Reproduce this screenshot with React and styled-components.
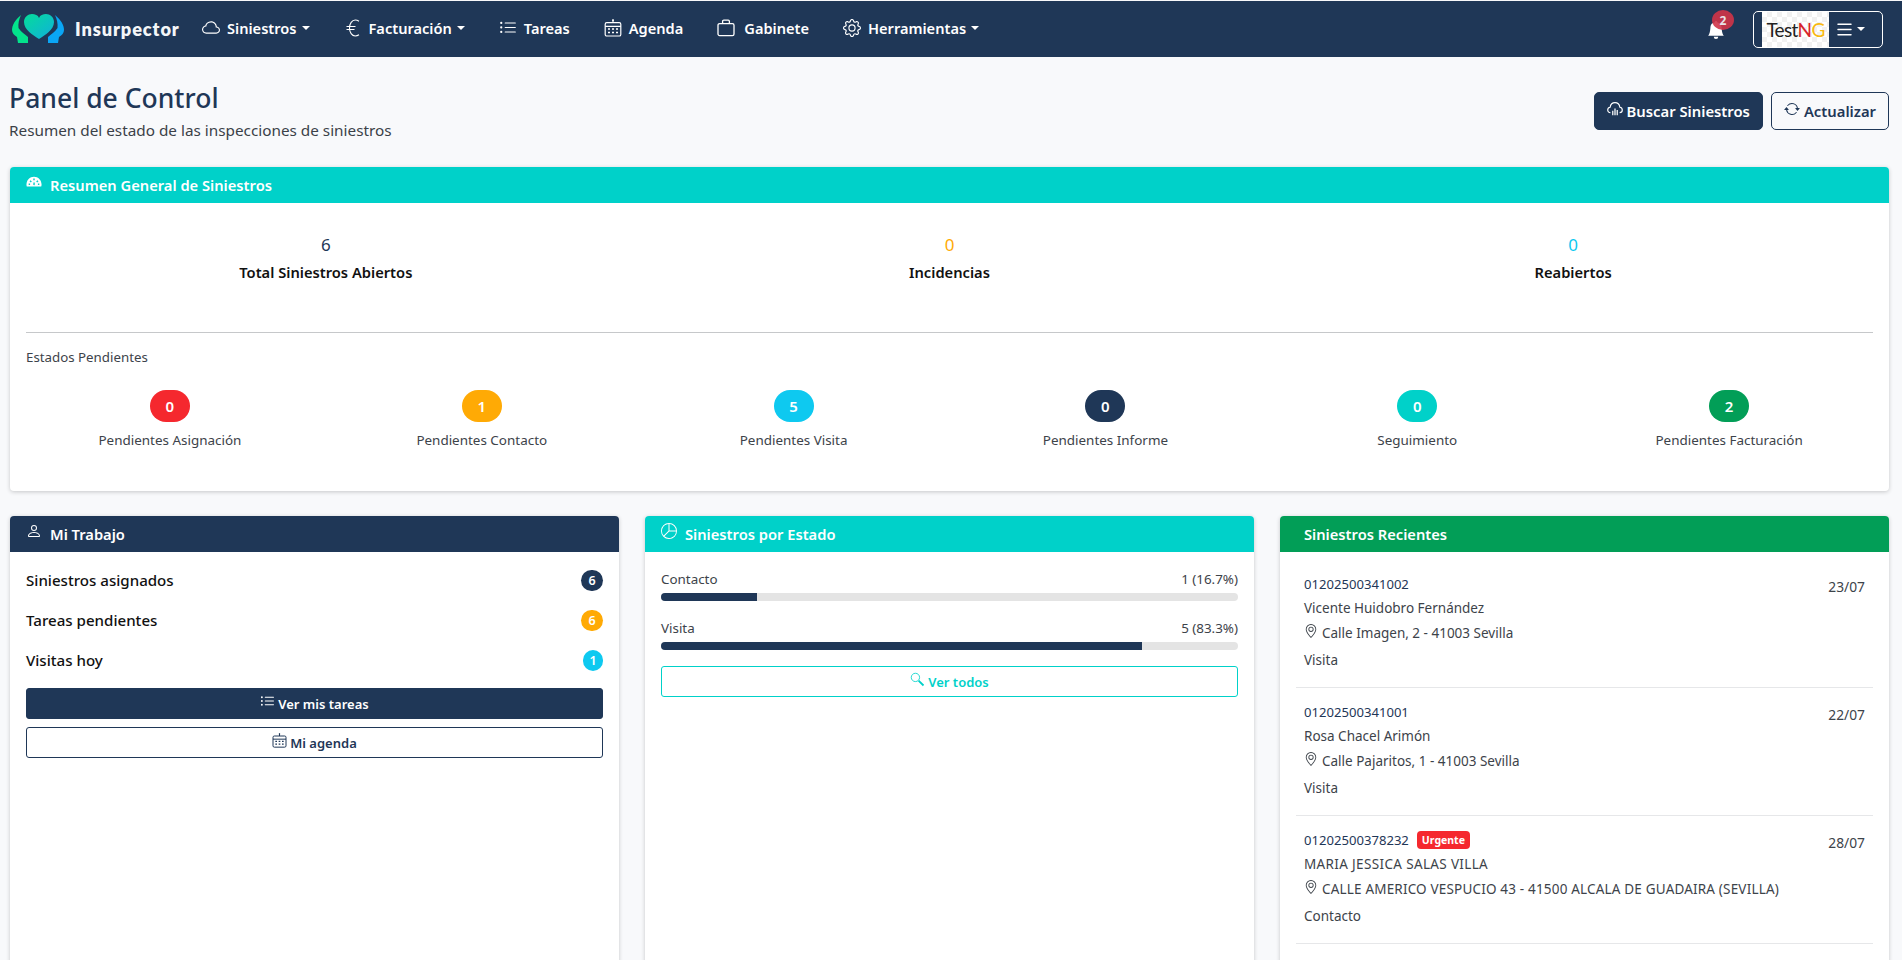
import React from 'react';
import styled, { createGlobalStyle } from 'styled-components';
import {
  BsCloud, BsListUl, BsGear, BsBellFill, BsArrowRepeat,
  BsPerson, BsPieChart, BsGeoAlt, BsList,
} from 'react-icons/bs';

const navy = '#1f3757';
const teal = '#00d1c9';
const green = '#029e57';
const red = '#f5282e';
const amber = '#ffaa05';
const sky = '#0ec9f0';

const GlobalStyle = createGlobalStyle`
  html, body {
    margin: 0;
    height: 100%;
    overflow: hidden;
    background: #f8f9fb;
  }
  body {
    font-family: "Noto Sans", "Open Sans", sans-serif;
    font-size: 13px;
    color: #343a40;
  }
  * { box-sizing: border-box; }
`;

const Navbar = styled.nav`
  margin-top: 1px;
  height: 56px;
  background: ${navy};
  color: #fff;
  display: flex;
  align-items: center;
  padding: 0 19px 0 12px;
`;

const Brand = styled.div`
  display: flex;
  align-items: center;
  gap: 11px;
  width: 190px;
`;

const BrandName = styled.span`
  font: 800 18.2px Lato, "Noto Sans", sans-serif;
  letter-spacing: 0.9px;
  color: #f4f6f8;
`;

const NavLinks = styled.div`
  display: flex;
  align-items: center;
  gap: 34px;
  padding-bottom: 3px;
`;

const NavLink = styled.a`
  display: flex;
  align-items: center;
  gap: ${(p) => p.$gap || '7px'};
  font-size: 14.6px;
  font-weight: 600;
  color: #fff;
  white-space: nowrap;
  svg { font-size: 18px; flex: none; }
`;

const Caret = styled.span`
  width: 0;
  height: 0;
  margin-left: -2px;
  border-top: 4.5px solid currentColor;
  border-left: 4.5px solid transparent;
  border-right: 4.5px solid transparent;
`;

const NavRight = styled.div`
  margin-left: auto;
  display: flex;
  align-items: center;
  gap: 28px;
`;

const BellWrap = styled.div`
  position: relative;
  display: flex;
  font-size: 18px;
  padding-top: 2px;
`;

const BellBadge = styled.span`
  position: absolute;
  top: -9px;
  left: 5px;
  width: 22px;
  height: 20px;
  border-radius: 50%;
  background: rgba(208, 52, 72, 0.9);
  color: #e9e2e6;
  font-size: 12px;
  font-weight: 700;
  display: flex;
  align-items: center;
  justify-content: center;
`;

const UserBox = styled.div`
  width: 130px;
  height: 37px;
  border: 1px solid #fff;
  border-radius: 5px;
  display: flex;
  align-items: center;
  padding-left: 8px;
  gap: 5px;
`;

const CompanyLogo = styled.div`
  width: 67px;
  height: 35px;
  background-color: #fff;
  background-image: conic-gradient(#f1f1f1 25%, #fff 0 50%, #f1f1f1 0 75%, #fff 0);
  background-size: 10px 10px;
  display: flex;
  align-items: center;
  justify-content: center;
  font: 400 19px Lato, sans-serif;
  letter-spacing: -0.7px;
  color: #222;
`;

const LogoLetter = styled.span`
  color: ${(p) => p.$color};
`;

const MenuToggle = styled.div`
  display: flex;
  align-items: center;
  gap: 4px;
  font-size: 21px;
`;

const Page = styled.main`
  padding: 0 13px 0 10px;
`;

const PageHeader = styled.header`
  display: flex;
  justify-content: space-between;
  align-items: flex-start;
  height: 110px;
  padding-top: 23px;
`;

const Title = styled.h1`
  margin: 0 0 3px -1px;
  font-size: 26.5px;
  font-weight: 500;
  line-height: 36px;
  color: ${navy};
`;

const Subtitle = styled.p`
  margin: 0 0 0 -1px;
  font-size: 15.3px;
  line-height: 22px;
  color: #3b4148;
`;

const HeaderActions = styled.div`
  display: flex;
  gap: 8px;
  margin-top: 12px;
`;

const ActionButton = styled.button`
  height: 38px;
  padding: 0 12px;
  display: flex;
  align-items: center;
  gap: 4px;
  border-radius: 5px;
  border: 1px solid ${navy};
  background: ${(p) => (p.$outline ? 'transparent' : navy)};
  color: ${(p) => (p.$outline ? navy : '#fff')};
  font: 600 14.8px "Noto Sans", sans-serif;
  svg { font-size: 16px; margin-top: -5px; }
`;

const Card = styled.section`
  background: #fff;
  border-radius: 4px;
  box-shadow: 0 1px 4px rgba(0, 0, 0, 0.2);
  overflow: hidden;
`;

const CardHeader = styled.div`
  height: 36px;
  padding: 0 ${(p) => (p.$plain ? '24px' : '16px')} 1px;
  display: flex;
  align-items: center;
  gap: 8px;
  background: ${(p) => p.$bg};
  color: #fff;
  font-size: 14.7px;
  font-weight: 600;
  svg { font-size: 16px; margin-top: -5px; }
`;

const SummaryBody = styled.div`
  padding: 30px 16px 41px;
`;

const StatRow = styled.div`
  display: grid;
  grid-template-columns: repeat(3, 1fr);
  margin: 0 -12px;
  text-align: center;
`;

const StatValue = styled.div`
  font-size: 17px;
  line-height: 24px;
  color: ${(p) => p.$color};
`;

const StatLabel = styled.div`
  margin-top: 3px;
  font-size: 14.7px;
  font-weight: 600;
  line-height: 24px;
  color: #111;
`;

const Divider = styled.hr`
  margin: 48px 0 14px;
  border: 0;
  border-top: 1.5px solid #c6c8ca;
`;

const SectionLabel = styled.div`
  font-size: 13.3px;
  line-height: 20px;
  color: #3d434a;
`;

const PendingRow = styled.div`
  display: grid;
  grid-template-columns: repeat(6, 1fr);
  margin: 23px -12px 0;
  text-align: center;
`;

const PendingCell = styled.div`
  display: flex;
  flex-direction: column;
  align-items: center;
  gap: 8px;
`;

const Pill = styled.span`
  width: 40px;
  height: 32px;
  border-radius: 16px;
  background: ${(p) => p.$bg};
  color: #fff;
  font-size: 15px;
  font-weight: 600;
  display: flex;
  align-items: center;
  justify-content: center;
`;

const PendingLabel = styled.span`
  font-size: 13.45px;
  line-height: 20px;
  color: #3d434a;
`;

const Columns = styled.div`
  margin-top: 25px;
  display: grid;
  grid-template-columns: repeat(3, 1fr);
  gap: 26px;
  height: 520px;
`;

const WorkBody = styled.div`
  padding: 8px 16px;
`;

const WorkRow = styled.div`
  height: 40px;
  display: flex;
  align-items: center;
  justify-content: space-between;
  font-size: 15.1px;
  font-weight: 500;
  color: #111;
`;

const CountBadge = styled.span`
  min-width: ${(p) => (p.$narrow ? '20px' : '22px')};
  height: 21px;
  border-radius: 11px;
  background: ${(p) => p.$bg};
  color: #fff;
  font-size: 12.5px;
  font-weight: 600;
  display: flex;
  align-items: center;
  justify-content: center;
`;

const BlockButton = styled.button`
  width: 100%;
  height: 31px;
  margin-top: ${(p) => p.$mt || '8px'};
  display: flex;
  align-items: center;
  justify-content: center;
  gap: 3px;
  border-radius: 3px;
  border: 1px solid ${(p) => p.$color};
  background: ${(p) => (p.$solid ? p.$color : '#fff')};
  color: ${(p) => (p.$solid ? '#fff' : p.$color)};
  font: 600 13px "Noto Sans", sans-serif;
  svg { font-size: 15px; margin-top: -4px; }
`;

const StateBody = styled.div`
  padding: 17px 16px;
`;

const BarGroup = styled.div`
  & + & { margin-top: 17px; }
`;

const BarHead = styled.div`
  display: flex;
  justify-content: space-between;
  font-size: 13.4px;
  line-height: 20px;
  color: #3d434a;
`;

const BarTrack = styled.div`
  height: 8px;
  margin-top: 4px;
  border-radius: 4px;
  background: #e4e4e4;
  overflow: hidden;
`;

const BarFill = styled.div`
  height: 100%;
  background: ${navy};
`;

const RecentList = styled.div`
  padding: 8px 16px 0;
`;

const RecentItem = styled.article`
  display: flex;
  justify-content: space-between;
  padding: 14px 8px 17px;
  border-bottom: 1px solid #e6e7e9;
  font-size: 13.5px;
  line-height: 20px;
  color: #3d434a;
`;

const RecentLines = styled.div`
  display: flex;
  flex-direction: column;
`;

const RecentId = styled.div`
  display: flex;
  align-items: center;
  gap: 8px;
  font-size: 13.1px;
  color: ${navy};
`;

const UrgentTag = styled.span`
  height: 18px;
  padding: 0 5px;
  border-radius: 4px;
  background: ${red};
  color: #fff;
  font-size: 10.5px;
  font-weight: 700;
  line-height: 18px;
`;

const RecentName = styled.div`
  margin-top: 4px;
  letter-spacing: ${(p) => (p.$caps ? '0.35px' : '0')};
`;

const RecentAddress = styled.div`
  margin-top: 5px;
  display: flex;
  align-items: center;
  gap: 4px;
  letter-spacing: ${(p) => (p.$caps ? '0.18px' : '0')};
  svg { font-size: 14px; margin-top: -5px; }
`;

const RecentState = styled.div`
  margin-top: 7px;
`;

const RecentDate = styled.div`
  margin-top: 3px;
  font-size: 13.8px;
`;

const LogoMark = () => (
  <svg width="52" height="30" viewBox="0 0 52 30">
    <defs>
      <linearGradient id="heartFill" x1="0" y1="0" x2="1" y2="1">
        <stop offset="0" stopColor="#05dc9a" />
        <stop offset="1" stopColor="#10b0dc" />
      </linearGradient>
    </defs>
    <path d="M9 1C3 6 0 11 0 16c0 3 2 5 5 7l1 6h10v-6c-3-3-7-5-9.500-9C6 10 7 5 9 1z" fill="#03e38c" />
    <path d="M43 1c6 5 9 10 9 15 0 3-2 5-5 7l-1 6H36v-6c3-3 7-5 9.500-9C46 10 45 5 43 1z" fill="#0aa6f5" />
    <path d="M27 25C21 21 12 16 12 8c0-5 4-8 8-8 3 0 6 1 7 4 1-3 4-4 7-4 4 0 8 3 8 8 0 8-9 13-15 17z" fill="url(#heartFill)" />
  </svg>
);

const EuroIcon = () => (
  <svg width="1em" height="1em" viewBox="0 0 18 18" fill="none" stroke="currentColor" strokeWidth="1.100">
    <path d="M15 2.200C13.600 1.300 12.400 1 11.200 1 8 1 5.500 4.500 5.500 9s2.500 8 5.700 8c1.200 0 2.400-.3 3.800-1.200" />
    <path d="M2.500 7.500h9M2.500 10.500h8" />
  </svg>
);

const AgendaIcon = () => (
  <svg width="1em" height="1em" viewBox="0 0 18 18" fill="none" stroke="currentColor" strokeWidth="1.200">
    <rect x="1.200" y="3.600" width="15.600" height="13.400" rx="1.600" />
    <path d="M1.200 7.400h15.600M9 .6v3" />
    <circle cx="9" cy="1.200" r=".9" fill="currentColor" stroke="none" />
    <path d="M4 10h2M8 10h2M12 10h2M4 13.400h2M8 13.400h2M12 13.400h2" strokeWidth="1.500" />
  </svg>
);

const CaseIcon = () => (
  <svg width="1em" height="1em" viewBox="0 0 18 18" fill="none" stroke="currentColor" strokeWidth="1.300">
    <rect x="1" y="4.600" width="16" height="12" rx="1.600" />
    <path d="M5.600 4.600V2.400c0-.8.5-1.200 1.200-1.200h4.400c.7 0 1.200.4 1.200 1.200v2.200" />
  </svg>
);

const CloudBarsIcon = () => (
  <svg width="1em" height="1em" viewBox="0 0 18 18" fill="none" stroke="currentColor" strokeWidth="1.300">
    <path d="M3.800 13C2 13 .8 11.700.8 10c0-1.600 1.200-2.800 2.700-3C4 4 6.300 1.800 9 1.800S14 4 14.500 7c1.500.2 2.700 1.400 2.700 3 0 1.700-1.200 3-3 3" />
    <path d="M6.500 11v5M9 8.500V16M11.500 10v6" strokeWidth="1.400" />
  </svg>
);

const GaugeIcon = () => (
  <svg width="1em" height="1em" viewBox="0 0 18 18">
    <path d="M9 3C4.300 3 .5 7 .5 12c0 .8.200 1.500.4 2h16.200c.2-.5.400-1.200.400-2 0-5-3.800-9-8.500-9z" fill="currentColor" />
    <path d="M9 5v2M4.500 7.500 6 9M13.500 7.500 12 9M3 11.500h1.600M13.400 11.500H15M9 12.500l.1-3" stroke={teal} strokeWidth="1.600" fill="none" />
  </svg>
);

const LensIcon = () => (
  <svg width="1em" height="1em" viewBox="0 0 18 18" fill="none" stroke="currentColor" strokeWidth="1">
    <circle cx="6.500" cy="6.500" r="5" />
    <path d="M10.300 10.300 16.200 16.200" strokeWidth="2.200" />
  </svg>
);

const pendientes = [
  { label: 'Pendientes Asignación', value: 0, bg: red },
  { label: 'Pendientes Contacto', value: 1, bg: amber },
  { label: 'Pendientes Visita', value: 5, bg: sky },
  { label: 'Pendientes Informe', value: 0, bg: navy },
  { label: 'Seguimiento', value: 0, bg: teal },
  { label: 'Pendientes Facturación', value: 2, bg: green },
];

const recientes = [
  { id: '01202500341002', name: 'Vicente Huidobro Fernández', address: 'Calle Imagen, 2 - 41003 Sevilla', state: 'Visita', date: '23/07' },
  { id: '01202500341001', name: 'Rosa Chacel Arimón', address: 'Calle Pajaritos, 1 - 41003 Sevilla', state: 'Visita', date: '22/07' },
  { id: '01202500378232', urgent: true, name: 'MARIA JESSICA SALAS VILLA', address: 'CALLE AMERICO VESPUCIO 43 - 41500 ALCALA DE GUADAIRA (SEVILLA)', state: 'Contacto', date: '28/07' },
];

const App = () => (
  <>
    <GlobalStyle />
    <Navbar>
      <Brand>
        <LogoMark />
        <BrandName>Insurpector</BrandName>
      </Brand>
      <NavLinks>
        <NavLink><BsCloud />Siniestros<Caret /></NavLink>
        <NavLink><EuroIcon />Facturación<Caret /></NavLink>
        <NavLink><BsListUl />Tareas</NavLink>
        <NavLink><AgendaIcon />Agenda</NavLink>
        <NavLink $gap="9px"><CaseIcon />Gabinete</NavLink>
        <NavLink><BsGear />Herramientas<Caret /></NavLink>
      </NavLinks>
      <NavRight>
        <BellWrap>
          <BsBellFill />
          <BellBadge>2</BellBadge>
        </BellWrap>
        <UserBox>
          <CompanyLogo>
            Test<LogoLetter $color="#d8232a">N</LogoLetter><LogoLetter $color="#f8b90f">G</LogoLetter>
          </CompanyLogo>
          <MenuToggle><BsList /><Caret /></MenuToggle>
        </UserBox>
      </NavRight>
    </Navbar>

    <Page>
      <PageHeader>
        <div>
          <Title>Panel de Control</Title>
          <Subtitle>Resumen del estado de las inspecciones de siniestros</Subtitle>
        </div>
        <HeaderActions>
          <ActionButton><CloudBarsIcon />Buscar Siniestros</ActionButton>
          <ActionButton $outline><BsArrowRepeat />Actualizar</ActionButton>
        </HeaderActions>
      </PageHeader>

      <Card>
        <CardHeader $bg={teal}><GaugeIcon />Resumen General de Siniestros</CardHeader>
        <SummaryBody>
          <StatRow>
            <div><StatValue $color={navy}>6</StatValue><StatLabel>Total Siniestros Abiertos</StatLabel></div>
            <div><StatValue $color={amber}>0</StatValue><StatLabel>Incidencias</StatLabel></div>
            <div><StatValue $color={sky}>0</StatValue><StatLabel>Reabiertos</StatLabel></div>
          </StatRow>
          <Divider />
          <SectionLabel>Estados Pendientes</SectionLabel>
          <PendingRow>
            {pendientes.map((p) => (
              <PendingCell key={p.label}>
                <Pill $bg={p.bg}>{p.value}</Pill>
                <PendingLabel>{p.label}</PendingLabel>
              </PendingCell>
            ))}
          </PendingRow>
        </SummaryBody>
      </Card>

      <Columns>
        <Card>
          <CardHeader $bg={navy}><BsPerson />Mi Trabajo</CardHeader>
          <WorkBody>
            <WorkRow>Siniestros asignados<CountBadge $bg={navy}>6</CountBadge></WorkRow>
            <WorkRow>Tareas pendientes<CountBadge $bg={amber}>6</CountBadge></WorkRow>
            <WorkRow>Visitas hoy<CountBadge $bg={sky} $narrow>1</CountBadge></WorkRow>
            <BlockButton $solid $color={navy} $mt="8px"><BsListUl />Ver mis tareas</BlockButton>
            <BlockButton $color={navy}><AgendaIcon />Mi agenda</BlockButton>
          </WorkBody>
        </Card>

        <Card>
          <CardHeader $bg={teal}><BsPieChart />Siniestros por Estado</CardHeader>
          <StateBody>
            <BarGroup>
              <BarHead><span>Contacto</span><span>1 (16.7%)</span></BarHead>
              <BarTrack><BarFill style={{ width: '16.7%' }} /></BarTrack>
            </BarGroup>
            <BarGroup>
              <BarHead><span>Visita</span><span>5 (83.3%)</span></BarHead>
              <BarTrack><BarFill style={{ width: '83.3%' }} /></BarTrack>
            </BarGroup>
            <BlockButton $color={teal} $mt="16px"><LensIcon />Ver todos</BlockButton>
          </StateBody>
        </Card>

        <Card>
          <CardHeader $bg={green} $plain>Siniestros Recientes</CardHeader>
          <RecentList>
            {recientes.map((r) => (
              <RecentItem key={r.id}>
                <RecentLines>
                  <RecentId>{r.id}{r.urgent && <UrgentTag>Urgente</UrgentTag>}</RecentId>
                  <RecentName $caps={r.urgent}>{r.name}</RecentName>
                  <RecentAddress $caps={r.urgent}><BsGeoAlt />{r.address}</RecentAddress>
                  <RecentState>{r.state}</RecentState>
                </RecentLines>
                <RecentDate>{r.date}</RecentDate>
              </RecentItem>
            ))}
          </RecentList>
        </Card>
      </Columns>
    </Page>
  </>
);

export default App;
